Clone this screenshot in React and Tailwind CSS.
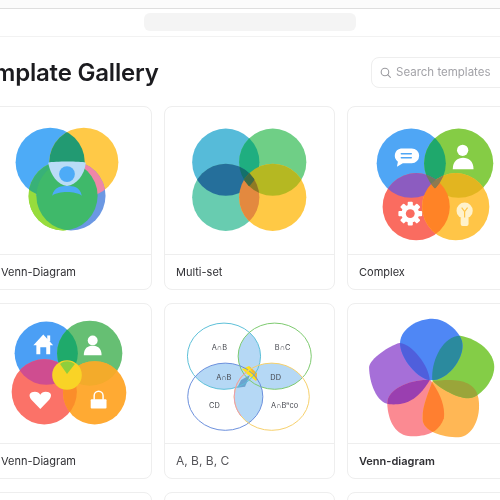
import React from "react";

const font = { fontFamily: "Inter, sans-serif" };

function Card({ label, imageClass, labelClass = "", box, children }) {
  return (
    <div className="rounded-lg border border-[#eeeeee] bg-white overflow-hidden">
      <div className={imageClass + " border-b border-[#eeeeee]"}>
        {box ? (
          <svg viewBox={box} className="block w-full h-full">
            {children}
          </svg>
        ) : null}
      </div>
      {label ? (
        <div className={"flex items-center h-[34px] px-[11px] text-[11px] text-[#2f2f33] " + labelClass}>{label}</div>
      ) : null}
    </div>
  );
}

function Clip({ id, children }) {
  return <clipPath id={id}>{children}</clipPath>;
}

function Circles({ p, items }) {
  return (
    <>
      <defs>
        {items.map((c, i) => (
          <Clip key={i} id={p + i}>
            <circle cx={c[0]} cy={c[1]} r={c[2]} />
          </Clip>
        ))}
      </defs>
      {items.map((c, i) => (
        <circle key={i} cx={c[0]} cy={c[1]} r={c[2]} fill={c[3]} />
      ))}
    </>
  );
}

function Lens({ p, a, b, items, fill }) {
  const c = items[b];
  return (
    <g clipPath={`url(#${p}${a})`}>
      <circle cx={c[0]} cy={c[1]} r={c[2]} fill={fill} />
    </g>
  );
}

const c1 = [
  [50, 162, 35, "#4dabf7"],
  [84, 162, 35, "#ffc947"],
  [63, 196, 35, "#97dc3d"],
  [71, 196, 35, "#6b98e3"],
];
const c2 = [
  [226.5, 162, 34, "#56bbd9"],
  [274, 162, 34, "#6fcf86"],
  [226.5, 197.5, 34, "#68ccb0"],
  [274, 197.5, 34, "#ffc945"],
];
const c3 = [
  [412, 163, 35, "#4fa6f5"],
  [460, 163, 35, "#85cc45"],
  [417, 207, 34, "#fa6c60"],
  [457, 207, 34, "#ffc547"],
];
const c4 = [
  [46, 351, 32, "#4b9ff5"],
  [90, 351, 33, "#66bf73"],
  [44, 390, 33, "#fb7268"],
  [95, 391, 32, "#ffaa33"],
];

function Venn1() {
  return (
    <>
      <Circles p="a" items={c1} />
      <g clipPath="url(#a2)">
        <circle cx="71" cy="196" r="35" fill="#6b98e3" />
      </g>
      <g clipPath="url(#a2)">
        <path d="M28 196h38v40H28z" fill="#97dc3d" />
      </g>
      <Lens p="a" a={0} b={2} items={c1} fill="#38b178" />
      <Lens p="a" a={1} b={3} items={c1} fill="#ef86a8" />
      <Lens p="a" a={0} b={1} items={c1} fill="#229a72" />
      <g clipPath="url(#a2)">
        <circle cx="71" cy="196" r="35" fill="none" />
      </g>
      <g clipPath="url(#a2)">
        <g clipPath="url(#a3)">
          <rect x="30" y="160" width="80" height="80" fill="#3fb96a" />
        </g>
      </g>
      <path d="M48 162.500 C55 161 80 161 86 162.500 C85 175 76 185 67 186 C58 185 50 175 48 162.500Z" fill="#b9dcf7" />
      <circle cx="67" cy="174" r="8" fill="#4dabf7" />
      <path d="M52 196 C54 186 62 186 67 186 C73 186 80 186 82 196 C76 191 58 191 52 196Z" fill="#4dabf7" />
    </>
  );
}

function Venn2() {
  return (
    <>
      <Circles p="b" items={c2} />
      <Lens p="b" a={0} b={1} items={c2} fill="#1fae80" />
      <Lens p="b" a={0} b={2} items={c2} fill="#256f9b" />
      <Lens p="b" a={1} b={3} items={c2} fill="#b5b822" />
      <Lens p="b" a={2} b={3} items={c2} fill="#e3893f" />
      <g clipPath="url(#b0)">
        <Lens p="b" a={1} b={2} items={c2} fill="#13706b" />
      </g>
      <g clipPath="url(#b2)">
        <Lens p="b" a={3} b={1} items={c2} fill="#8e7a24" />
      </g>
      <g clipPath="url(#b0)">
        <g clipPath="url(#b1)">
          <Lens p="b" a={2} b={3} items={c2} fill="#3f6a45" />
        </g>
      </g>
    </>
  );
}

function Gear({ cx, cy }) {
  return (
    <g>
      <circle cx={cx} cy={cy} r="9" fill="#fff" />
      {[0, 45, 90, 135].map((a) => (
        <rect key={a} x={cx - 2.6} y={cy - 12} width="5.200" height="24" rx="1" fill="#fff" transform={`rotate(${a} ${cx} ${cy})`} />
      ))}
      <circle cx={cx} cy={cy} r="4.500" fill="#fa6c60" />
    </g>
  );
}

function Venn3() {
  return (
    <>
      <Circles p="c" items={c3} />
      <Lens p="c" a={0} b={1} items={c3} fill="#1fa86c" />
      <Lens p="c" a={0} b={2} items={c3} fill="#8c5cc0" />
      <Lens p="c" a={1} b={3} items={c3} fill="#e2b520" />
      <Lens p="c" a={2} b={3} items={c3} fill="#ff8326" />
      <g clipPath="url(#c1)">
        <Lens p="c" a={0} b={2} items={c3} fill="#6f7a60" />
      </g>
      <g clipPath="url(#c3)">
        <Lens p="c" a={0} b={1} items={c3} fill="#8f7a50" />
      </g>
      <path d="M401.500 148h11a7.500 7.500 0 0 1 0 15h-9l-6 3.500 1-5a7.500 7.500 0 0 1 3-13.500Z" fill="#fff" />
      <path d="M402 153.500h10M402 157.500h10" stroke="#4fa6f5" strokeWidth="1.600" strokeLinecap="round" />
      <circle cx="464" cy="150" r="5.700" fill="#fff" />
      <path d="M454 169C454 161 459 157.500 464.500 157.500C470 157.500 475 161 475 169Z" fill="#fff" />
      <Gear cx={411} cy={214} />
      <circle cx="466" cy="211" r="8.200" fill="#fff2cc" />
      <path d="M462 218h8v6.500a2 2 0 0 1-2 2h-4a2 2 0 0 1-2-2Z" fill="#fff2cc" />
      <path d="M463 208l3 4 3-4M466 212v6" stroke="#ffc547" strokeWidth="1.200" fill="none" />
    </>
  );
}

function Venn4() {
  return (
    <>
      <Circles p="d" items={c4} />
      <Lens p="d" a={0} b={1} items={c4} fill="#1faa6b" />
      <Lens p="d" a={0} b={2} items={c4} fill="#cf4d90" />
      <Lens p="d" a={1} b={3} items={c4} fill="#f3ab2b" />
      <Lens p="d" a={2} b={3} items={c4} fill="#fb8d2a" />
      <circle cx="67" cy="373" r="15" fill="#f9d326" />
      <path d="M60 362C63 358 71 358 75 362L67 372Z" fill="#8fcf3c" />
      <path d="M33 343L43 332L53 343H50V352H46V345H40V352H36V343Z" fill="#fff" />
      <rect x="47" y="333" width="3" height="6" fill="#fff" />
      <circle cx="93" cy="338" r="5" fill="#fff" />
      <path d="M84 353C84 346 88 343.500 93 343.500C98 343.500 102 346 102 353Z" fill="#fff" />
      <path d="M40 407.500L31 398C27 393 30 390 34.500 390C37 390 39 391 40 393C41 391 43 390 45.500 390C50 390 53 393 49 398Z" fill="#fff" />
      <path d="M94.500 398v-4a4.500 4.500 0 0 1 9 0v4" fill="none" stroke="#fff" strokeWidth="1.500" />
      <rect x="91" y="397.500" width="16" height="9.500" rx="1" fill="#fff" />
    </>
  );
}

const labelsV = [
  ["A∩B", 220, 346],
  ["B∩C", 284, 346],
  ["A∩B", 224.500, 376],
  ["DD", 277, 376],
  ["CD", 215, 404],
  ["A∩Bⁿco", 286, 404],
];

function Venn5() {
  const e = [
    [224.700, 354, 37, 33.500],
    [276, 354, 37, 33.500],
    [226, 395, 38, 34],
    [273, 395, 38, 34],
  ];
  const strokes = ["#5cbfd8", "#7cc96e", "#6a8fdc", "#f6cf6a"];
  const E = (x, p = {}) => <ellipse cx={x[0]} cy={x[1]} rx={x[2]} ry={x[3]} {...p} />;
  return (
    <>
      <defs>
        {e.map((x, i) => (
          <Clip key={i} id={"e" + i}>
            {E(x)}
          </Clip>
        ))}
      </defs>
      <g clipPath="url(#e0)">{E(e[1], { fill: "#b5d8f5" })}</g>
      <g clipPath="url(#e0)">{E(e[2], { fill: "#b5d8f5" })}</g>
      <g clipPath="url(#e1)">{E(e[3], { fill: "#b5d8f5" })}</g>
      <g clipPath="url(#e2)">{E(e[3], { fill: "#b5d8f5" })}</g>
      <path d="M243 367L250 364L257 374L257 379L248 372Z" fill="#ffe21a" />
      <path d="M250 364L258 371L258 379Z" fill="#f5b72e" />
      <path d="M242 378L251 373L246 385L238 386Z" fill="#6ba3cf" />
      {e.map((x, i) => E(x, { key: i, fill: "none", stroke: strokes[i], strokeWidth: 1 }))}
      <ellipse cx="273" cy="395" rx="38" ry="34" fill="none" stroke="#e79ab3" strokeWidth="1" strokeDasharray="50 200" strokeDashoffset="-92" />
      {labelsV.map(([t, x, y], i) => (
        <text key={i} x={x} y={y} textAnchor="middle" dominantBaseline="middle" fontSize="7.500" fill="#44464d" style={{ fontFamily: "Inter, sans-serif" }}>
          {t}
        </text>
      ))}
    </>
  );
}

const petals = {
  blue: "M275 235C240 235 180 170 182 120C185 75 240 48 280 48C320 48 372 90 372 130C372 170 330 235 275 235Z",
  green: "M280 235C275 180 310 100 365 100C420 110 468 150 468 195C468 240 420 290 390 290C350 290 290 250 280 235Z",
  orange: "M280 238C330 232 410 225 420 290C430 350 400 408 360 408C310 408 250 390 250 350C250 310 270 270 280 238Z",
  pink: "M275 235C300 270 320 310 315 350C300 395 260 405 215 405C170 405 145 360 143 305C143 260 220 230 275 235Z",
  purple: "M272 235C270 190 215 122 180 122C150 130 90 170 88 195C88 240 110 305 150 308C190 310 230 305 272 235Z",
};

function Venn6() {
  return (
    <g transform="translate(340 300) scale(0.33333)">
      <defs>
        {Object.entries(petals).map(([k, d]) => (
          <Clip key={k} id={"p" + k}>
            <path d={d} />
          </Clip>
        ))}
      </defs>
      <path d={petals.purple} fill="#a66fd8" />
      <path d={petals.pink} fill="#fb8a92" />
      <path d={petals.orange} fill="#ffb755" />
      <path d={petals.green} fill="#84cd47" />
      <path d={petals.blue} fill="#4f87f5" />
      <g clipPath="url(#pblue)">
        <path d={petals.green} fill="#2b8a9e" />
        <path d={petals.purple} fill="#4f5fdc" />
      </g>
      <g clipPath="url(#pgreen)">
        <path d={petals.orange} fill="#9aa53a" />
      </g>
      <g clipPath="url(#porange)">
        <path d={petals.pink} fill="#ff7f30" />
      </g>
      <g clipPath="url(#ppink)">
        <path d={petals.purple} fill="#9a3fb0" />
      </g>
    </g>
  );
}

export default function App() {
  return (
    <div className="w-[500px] h-[500px] overflow-hidden bg-white blur-[0.4px]" style={font}>
      <div className="h-[9px] bg-[#fbfbfb] border-b border-[#dedede]" />
      <div className="h-[28px] flex items-center justify-center border-b border-[#f2f2f2] pb-[1px]">
        <div className="w-[212px] h-[18px] rounded-md bg-[#f4f4f4]" />
      </div>
      <div className="flex items-center justify-between h-[69px] ml-[-34px] mr-[-10px] pt-[2px]">
        <h1 className="text-[24px] leading-[32px] font-semibold text-[#1b1b1f] tracking-[-0.2px]">Template Gallery</h1>
        <div className="flex items-center gap-[4px] w-[139px] h-[31px] pl-[7px] rounded-lg border border-[#eeeeee] text-[11.500px] text-[#a3a3a8]">
          <svg viewBox="0 0 24 24" className="w-[13px] h-[13px]" fill="none" stroke="#9a9a9f" strokeWidth="2" strokeLinecap="round">
            <circle cx="11" cy="11" r="7" />
            <path d="M16 16l5 5" />
          </svg>
          <span>Search templates</span>
        </div>
      </div>
      <div className="grid grid-cols-[171px_171px_171px] gap-x-[12px] gap-y-[13px] ml-[-19px]">
        <Card label={<span className="pl-[8px]">Venn-Diagram</span>} imageClass="h-[148px]" box="-19 107 171 147">
          <Venn1 />
        </Card>
        <Card label="Multi-set" imageClass="h-[148px]" box="165 107 171 147">
          <Venn2 />
        </Card>
        <Card label="Complex" imageClass="h-[148px]" box="348 107 171 147">
          <Venn3 />
        </Card>
        <Card label={<span className="pl-[8px]">Venn-Diagram</span>} imageClass="h-[140px]" box="-19 302 171 139">
          <Venn4 />
        </Card>
        <Card label={<span className="text-[#55555a] text-[12px]">A, B, B, C</span>} imageClass="h-[140px]" box="165 302 171 139">
          <Venn5 />
        </Card>
        <Card label={<span className="font-semibold">Venn-diagram</span>} imageClass="h-[140px]" box="348 302 171 139">
          <Venn6 />
        </Card>
        <Card imageClass="h-[60px]" />
        <Card imageClass="h-[60px]" />
        <Card imageClass="h-[60px]" />
      </div>
    </div>
  );
}
